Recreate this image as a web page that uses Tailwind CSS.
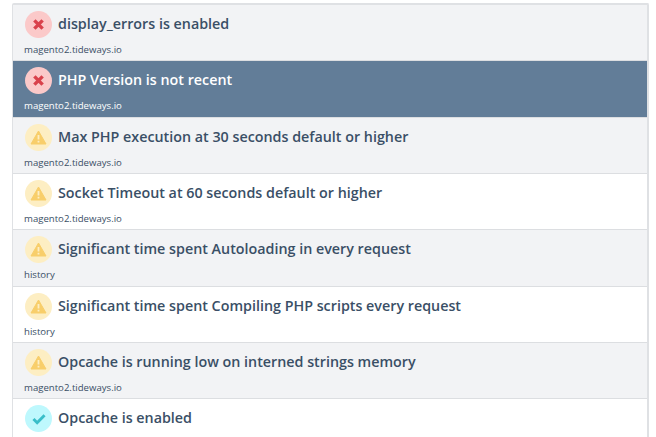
<!doctype html>
<html>
<head>
  <meta charset="UTF-8">
  <script src="https://cdn.jsdelivr.net/npm/@tailwindcss/browser@4"></script>
</head>
<body class="bg-white h-[437px] overflow-hidden font-['Open_Sans','Noto_Sans',sans-serif]">
  <div class="pt-[3px] pl-3 pr-[7px]">
    <ul class="border-t-[2px] border-l-[1px] border-r-[2px] border-[#dfe1e4] rounded-t-[2px]">
      <!-- errors -->
      <li class="h-[56.33px] bg-[#f2f3f5] border-b-[1.5px] border-[#dcdee1] px-[12px] text-[#3a4f66]">
        <div class="flex items-start gap-[6px] pt-[6px]">
          <span class="w-[27px] h-[27px] rounded-full bg-[#fbc9c9] flex items-center justify-center">
            <svg class="w-[13px] h-[13px]" viewBox="0 0 12 12"><path d="M2.2 2.2 9.8 9.8M9.8 2.2 2.2 9.8" stroke="#d9414b" stroke-width="3.2" fill="none"/></svg>
          </span>
          <span class="text-[14.3px] leading-[25px] font-semibold">display_errors is enabled</span>
        </div>
        <p class="text-[9.6px] leading-[14px] mt-[5px] -ml-[1px]">magento2.tideways.io</p>
      </li>
      <li class="h-[56.33px] bg-[#627d98] border-b-[1.5px] border-[#dcdee1] px-[12px] text-white">
        <div class="flex items-start gap-[6px] pt-[6px]">
          <span class="w-[27px] h-[27px] rounded-full bg-[#fbc9c9] flex items-center justify-center">
            <svg class="w-[13px] h-[13px]" viewBox="0 0 12 12"><path d="M2.2 2.2 9.8 9.8M9.8 2.2 2.2 9.8" stroke="#d9414b" stroke-width="3.2" fill="none"/></svg>
          </span>
          <span class="text-[14.3px] leading-[25px] font-semibold">PHP Version is not recent</span>
        </div>
        <p class="text-[9.6px] leading-[14px] mt-[5px] -ml-[1px]">magento2.tideways.io</p>
      </li>
      <!-- warnings -->
      <li class="h-[56.33px] bg-[#f2f3f5] border-b-[1.5px] border-[#dcdee1] px-[12px] text-[#3a4f66]">
        <div class="flex items-start gap-[6px] pt-[6px]">
          <span class="w-[27px] h-[27px] rounded-full bg-[#fdeec3] flex items-center justify-center">
            <svg class="w-[17px] h-[15px]" viewBox="0 0 17 15"><path d="M8.5 1 16 14H1Z" fill="#f8ce6a" stroke="#f8ce6a" stroke-linejoin="round"/><path d="M8.5 5v4.5M8.5 10.7v1.8" stroke="#fdeec3" stroke-width="1.8"/></svg>
          </span>
          <span class="text-[14.3px] leading-[25px] font-semibold">Max PHP execution at 30 seconds default or higher</span>
        </div>
        <p class="text-[9.6px] leading-[14px] mt-[5px] -ml-[1px]">magento2.tideways.io</p>
      </li>
      <li class="h-[56.33px] bg-white border-b-[1.5px] border-[#dcdee1] px-[12px] text-[#3a4f66]">
        <div class="flex items-start gap-[6px] pt-[6px]">
          <span class="w-[27px] h-[27px] rounded-full bg-[#fdeec3] flex items-center justify-center">
            <svg class="w-[17px] h-[15px]" viewBox="0 0 17 15"><path d="M8.5 1 16 14H1Z" fill="#f8ce6a" stroke="#f8ce6a" stroke-linejoin="round"/><path d="M8.5 5v4.5M8.5 10.7v1.8" stroke="#fdeec3" stroke-width="1.8"/></svg>
          </span>
          <span class="text-[14.3px] leading-[25px] font-semibold">Socket Timeout at 60 seconds default or higher</span>
        </div>
        <p class="text-[9.6px] leading-[14px] mt-[5px] -ml-[1px]">magento2.tideways.io</p>
      </li>
      <li class="h-[56.33px] bg-[#f2f3f5] border-b-[1.5px] border-[#dcdee1] px-[12px] text-[#3a4f66]">
        <div class="flex items-start gap-[6px] pt-[6px]">
          <span class="w-[27px] h-[27px] rounded-full bg-[#fdeec3] flex items-center justify-center">
            <svg class="w-[17px] h-[15px]" viewBox="0 0 17 15"><path d="M8.5 1 16 14H1Z" fill="#f8ce6a" stroke="#f8ce6a" stroke-linejoin="round"/><path d="M8.5 5v4.5M8.5 10.7v1.8" stroke="#fdeec3" stroke-width="1.8"/></svg>
          </span>
          <span class="text-[14.3px] leading-[25px] font-semibold">Significant time spent Autoloading in every request</span>
        </div>
        <p class="text-[9.6px] leading-[14px] mt-[5px] -ml-[1px]">history</p>
      </li>
      <li class="h-[56.33px] bg-white border-b-[1.5px] border-[#dcdee1] px-[12px] text-[#3a4f66]">
        <div class="flex items-start gap-[6px] pt-[6px]">
          <span class="w-[27px] h-[27px] rounded-full bg-[#fdeec3] flex items-center justify-center">
            <svg class="w-[17px] h-[15px]" viewBox="0 0 17 15"><path d="M8.5 1 16 14H1Z" fill="#f8ce6a" stroke="#f8ce6a" stroke-linejoin="round"/><path d="M8.5 5v4.5M8.5 10.7v1.8" stroke="#fdeec3" stroke-width="1.8"/></svg>
          </span>
          <span class="text-[14.3px] leading-[25px] font-semibold">Significant time spent Compiling PHP scripts every request</span>
        </div>
        <p class="text-[9.6px] leading-[14px] mt-[5px] -ml-[1px]">history</p>
      </li>
      <li class="h-[56.33px] bg-[#f2f3f5] border-b-[1.5px] border-[#dcdee1] px-[12px] text-[#3a4f66]">
        <div class="flex items-start gap-[6px] pt-[6px]">
          <span class="w-[27px] h-[27px] rounded-full bg-[#fdeec3] flex items-center justify-center">
            <svg class="w-[17px] h-[15px]" viewBox="0 0 17 15"><path d="M8.5 1 16 14H1Z" fill="#f8ce6a" stroke="#f8ce6a" stroke-linejoin="round"/><path d="M8.5 5v4.5M8.5 10.7v1.8" stroke="#fdeec3" stroke-width="1.8"/></svg>
          </span>
          <span class="text-[14.3px] leading-[25px] font-semibold">Opcache is running low on interned strings memory</span>
        </div>
        <p class="text-[9.6px] leading-[14px] mt-[5px] -ml-[1px]">magento2.tideways.io</p>
      </li>
      <!-- ok -->
      <li class="h-[56.33px] bg-white px-[12px] text-[#3a4f66]">
        <div class="flex items-start gap-[6px] pt-[6px]">
          <span class="w-[27px] h-[27px] rounded-full bg-[#bef8fd] flex items-center justify-center">
            <svg class="w-[14px] h-[12px]" viewBox="0 0 15 13"><path d="M1.5 6.5 5.5 10.5 13.5 2.5" stroke="#38bec9" stroke-width="3.2" fill="none"/></svg>
          </span>
          <span class="text-[14.3px] leading-[25px] font-semibold">Opcache is enabled</span>
        </div>
      </li>
    </ul>
  </div>
</body>
</html>
